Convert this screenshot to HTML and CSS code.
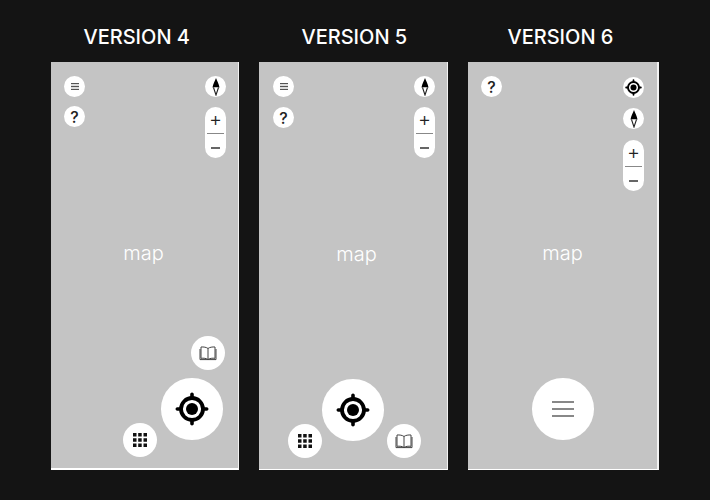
FILE: index.html
```html
<!DOCTYPE html>
<html lang="en">
<head>
<meta charset="utf-8">
<title>Map versions</title>
<link rel="stylesheet" href="styles.css">
</head>
<body>
<svg class="defs" width="0" height="0" aria-hidden="true">
  <symbol id="locate" viewBox="0 0 34 34">
    <circle cx="17" cy="17" r="11" fill="none" stroke="#000" stroke-width="3.800"/>
    <circle cx="17" cy="17" r="6" fill="#000"/>
    <path d="M17 2.300v3M17 28.700v3M2.300 17h3M28.700 17h3" stroke="#000" stroke-width="3.600" stroke-linecap="round"/>
  </symbol>
  <symbol id="book" viewBox="0 0 18 15">
    <path d="M9 2.500C7.500 1.200 4.500 .8 2 1V12.300C4.500 12 7.500 12.300 9 13.500C10.500 12.300 13.500 12 16 12.300V1C13.500 .8 10.500 1.200 9 2.500ZM9 2.500V13.500M1 3V13.600H17V3" fill="none" stroke="#444" stroke-width="1"/>
  </symbol>
  <symbol id="grid" viewBox="0 0 14 14">
    <path d="M0 0h3.500v3.500H0zM5.200 0h3.500v3.500H5.200zM10.500 0H14v3.500h-3.500zM0 5.200h3.500v3.500H0zM5.200 5.200h3.500v3.500H5.200zM10.500 5.200H14v3.500h-3.500zM0 10.500h3.500V14H0zM5.200 10.500h3.500V14H5.200zM10.500 10.500H14V14h-3.500z" fill="#111"/>
  </symbol>
  <symbol id="compass" viewBox="0 0 8 18">
    <path d="M4 0C5 3 7 6 7.500 9.500H.5C1 6 3 3 4 0Z" fill="#000"/>
    <path d="M1.500 9.500L4 17L6.500 9.500" fill="#fff" stroke="#222" stroke-width="1.100"/>
  </symbol>
</svg>

<main class="board">
  <section class="version version-4">
    <h2 class="title">VERSION 4</h2>
    <div class="phone">
      <span class="map">map</span>
      <button class="btn small menu-a"><span class="bars"></span></button>
      <button class="btn small help-a">?</button>
      <button class="btn small compass-a"><svg class="ic-compass"><use href="#compass"/></svg></button>
      <div class="zoom zoom-a"><span class="plus">+</span><span class="rule"></span><span class="minus"></span></div>
      <button class="btn mid book-4"><svg class="ic-book"><use href="#book"/></svg></button>
      <button class="btn big locate-4"><svg class="ic-locate"><use href="#locate"/></svg></button>
      <button class="btn mid grid-4"><svg class="ic-grid"><use href="#grid"/></svg></button>
    </div>
  </section>

  <section class="version version-5">
    <h2 class="title">VERSION 5</h2>
    <div class="phone">
      <span class="map">map</span>
      <button class="btn small menu-a"><span class="bars"></span></button>
      <button class="btn small help-a">?</button>
      <button class="btn small compass-a"><svg class="ic-compass"><use href="#compass"/></svg></button>
      <div class="zoom zoom-a"><span class="plus">+</span><span class="rule"></span><span class="minus"></span></div>
      <button class="btn big locate-5"><svg class="ic-locate"><use href="#locate"/></svg></button>
      <button class="btn mid grid-5"><svg class="ic-grid"><use href="#grid"/></svg></button>
      <button class="btn mid book-5"><svg class="ic-book"><use href="#book"/></svg></button>
    </div>
  </section>

  <section class="version version-6">
    <h2 class="title">VERSION 6</h2>
    <div class="phone">
      <span class="map">map</span>
      <button class="btn small help-a">?</button>
      <button class="btn small locate-6"><svg class="ic-locate-small"><use href="#locate"/></svg></button>
      <button class="btn small compass-6"><svg class="ic-compass"><use href="#compass"/></svg></button>
      <div class="zoom zoom-6"><span class="plus">+</span><span class="rule"></span><span class="minus"></span></div>
      <button class="btn big menu-6"><span class="bars-large"></span></button>
    </div>
  </section>
</main>
</body>
</html>
```
FILE: styles.css
```css
* { box-sizing: border-box; }
html, body { margin: 0; height: 100%; }
body {
  background: #141414;
  font-family: Inter, "Liberation Sans", sans-serif;
  overflow: hidden;
}
.defs { position: absolute; }

.board {
  display: flex;
  gap: 20px;
  padding-left: 51px;
}
.version-4 { width: 188px; }
.version-5 { width: 189px; }
.version-6 { width: 191px; }

.title {
  margin: 0;
  height: 62px;
  padding-top: 25px;
  font-size: 20px;
  line-height: 24px;
  font-weight: 500;
  color: #fff;
  white-space: nowrap;
}
.version-4 .title { padding-left: 32.500px; }
.version-5 .title { padding-left: 42.500px; }
.version-6 .title { padding-left: 39.500px; }

.phone {
  position: relative;
  height: 408px;
  background: #c4c4c4;
  border-bottom: 1px solid #fff;
  border-right: 1px solid #f2f2f2;
  display: flex;
  align-items: center;
  justify-content: center;
}
.version-4 .phone { border-bottom-width: 2px; }
.version-6 .phone { border-right-width: 2px; border-bottom-width: 1px; }

.map {
  font-size: 20px;
  font-weight: 300;
  color: #fff;
  line-height: 22px;
  margin-left: -2px;
  margin-top: -24px;
}
.version-5 .map { margin-top: -23px; margin-left: 7px; }
.version-6 .map { margin-top: -25px; margin-left: 0; }

.btn {
  position: absolute;
  padding: 0;
  border: 0;
  border-radius: 50%;
  background: #fff;
  display: flex;
  align-items: center;
  justify-content: center;
  color: #222;
  font-family: Inter, "Liberation Sans", sans-serif;
}
.small { width: 21px; height: 21px; font-size: 16px; font-weight: 500; }
.mid { width: 34px; height: 34px; }
.big { width: 61.500px; height: 61.500px; }

.menu-a { left: 13px; top: 14px; }
.help-a { left: 13px; top: 44px; }
.compass-a { right: 12px; top: 14px; }
.zoom-a { right: 12px; top: 45px; }
.version-5 .menu-a, .version-5 .help-a { left: 14px; }
.version-5 .compass-a, .version-5 .zoom-a { right: 12px; }
.version-5 .help-a { top: 45px; }
.version-6 .help-a { top: 14px; }

.book-4 { left: 140px; top: 274px; }
.locate-4 { left: 110px; top: 316px; }
.grid-4 { left: 72px; top: 361px; }

.locate-5 { left: 63px; top: 317px; }
.grid-5 { left: 29px; top: 362px; }
.book-5 { left: 127.500px; top: 362px; }

.locate-6 { right: 13px; top: 15px; }
.compass-6 { right: 13px; top: 46px; }
.zoom-6 { right: 13px; top: 78px; }
.menu-6 { left: 64px; top: 316px; }

.zoom {
  position: absolute;
  width: 21px;
  height: 51px;
  border-radius: 11px;
  background: #fff;
}
.plus {
  position: absolute;
  left: 0;
  right: 0;
  top: 1px;
  text-align: center;
  font-size: 20px;
  line-height: 22px;
  font-weight: 300;
  color: #222;
}
.rule {
  position: absolute;
  left: 2px;
  right: 2px;
  top: 26px;
  height: 1px;
  background: #888;
}
.minus {
  position: absolute;
  left: 6px;
  right: 6px;
  top: 40px;
  height: 2px;
  background: #666;
}

.bars {
  width: 8px;
  height: 7px;
  background: repeating-linear-gradient(#555 0 1.400px, #ddd 1.400px 2.800px);
}
.bars-large {
  width: 22px;
  height: 16px;
  border-top: 2px solid #888;
  border-bottom: 2px solid #888;
  background: linear-gradient(#888, #888) center / 100% 2px no-repeat;
}

.ic-compass { width: 8px; height: 18px; }
.ic-book { width: 18px; height: 15px; }
.ic-grid { width: 14px; height: 14px; }
.ic-locate { width: 34px; height: 34px; }
.ic-locate-small { width: 17px; height: 17px; }
```
